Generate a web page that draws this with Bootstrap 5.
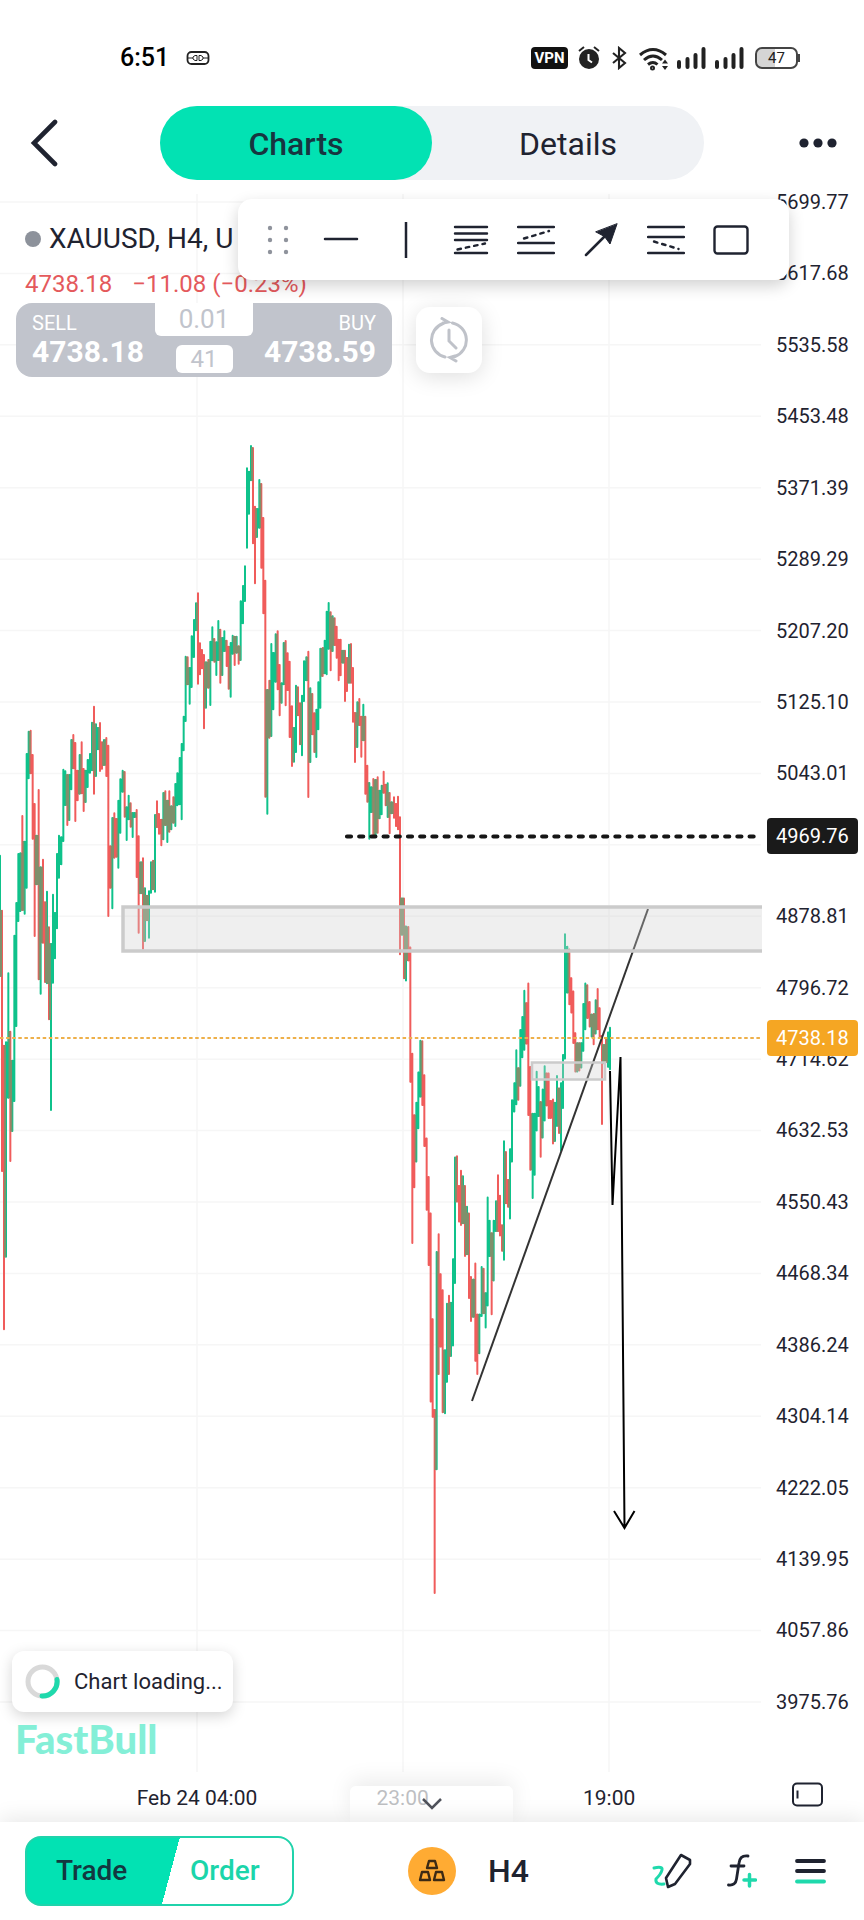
<!DOCTYPE html>
<html lang="en">
<head>
<meta charset="utf-8">
<meta name="viewport" content="width=device-width, initial-scale=1">
<title>XAUUSD H4 chart</title>
<link href="https://cdn.jsdelivr.net/npm/bootstrap@5.3.0/dist/css/bootstrap.min.css" rel="stylesheet">
<style>
  :root { --ink:#1f2330; --mint:#02e2b3; --mute:#c1c4cc; --red:#e4595c; }
  body { font-family: Roboto, "Liberation Sans", sans-serif; color: var(--ink); background:#fff; }
  button { background: none; border: 0; padding: 0; color: inherit; }
  svg { display: block; }
  .status-row { height: 100px; padding: 16px 64px 0 120px; }
  .clock-text { font-size: 25px; font-weight: 500; color:#000; }
  .vpn-tag { width: 37px; height: 22px; line-height: 22px; border-radius: 4px; background:#111; color:#fff; font-size: 15px; font-weight: 700; }
  .battery { width: 43px; height: 22px; border: 2px solid #444; border-radius: 7px; font-size: 15px; line-height: 18px; background: linear-gradient(90deg, #d5d5d5 46%, #fff 46%); color:#222; }
  .nub { width: 2px; height: 8px; background:#444; }
  .head-row { display: grid; grid-template-columns: 160px 1fr 160px; height: 84px; padding: 6px 0 4px; }
  .switch { background:#f0f2f5; border-radius: 37px; height: 74px; }
  .switch button { border-radius: 37px; font-size: 32px; padding-top: 2px; }
  .switch .on { background: var(--mint); font-weight: 500; color:#173540; }
  .chart-zone { min-height: 1590px; }
  .axis { width: 102px; padding: 8px 0 62px 14px; font-size: 20px; line-height: 20px; }
  .price-tag { left: 5px; width: 91px; height: 36px; line-height: 36px; padding-left: 9px; border-radius: 4px; color:#fff; }
  .quote { top: 35px; left: 16px; width: 376px; }
  .pair { font-size: 28px; line-height: 40px; padding-left: 9px; }
  .dot { width: 16px; height: 16px; border-radius: 50%; background:#8d929b; }
  .change { font-size: 24px; line-height: 30px; color: var(--red); padding-left: 9px; gap: 20px; margin-top: 10px; }
  .deal { height: 74px; border-radius: 16px; background: var(--mute); color:#fff; margin-top: 4px; }
  .deal button { padding: 8px 16px 0; font-size: 20px; line-height: 24px; }
  .deal strong { display: block; font-size: 30px; line-height: 34px; }
  .deal-mid { width: 98px; height: 74px; color: var(--mute); }
  .lot { width: 98px; height: 33px; border: 0; border-radius: 0 0 6px 6px; font-size: 26px; color: var(--mute); padding: 0; }
  .spread { width: 57px; height: 28px; line-height: 28px; border-radius: 6px; font-size: 24px; }
  .history { top: 123px; left: 416px; width: 66px; height: 66px; border-radius: 14px; background:#fff; box-shadow: 0 4px 22px rgba(0,0,0,.13); }
  .tools { top: 15px; left: 238px; right: 75px; height: 81px; border-radius: 14px; background:#fff; box-shadow: 0 6px 16px rgba(0,0,0,.18); padding: 0 26px 0 10px; }
  .tools button { flex: 1 1 0; }
  .grip { flex: 0 0 60px; }
  .loading { left: 12px; bottom: 62px; width: 221px; height: 61px; border-radius: 12px; background:#fff; box-shadow: 0 4px 14px rgba(0,0,0,.17); font-size: 22px; padding-left: 13px; gap: 14px; }
  .watermark { left: 15px; bottom: 15px; font-family: Lato, sans-serif; font-weight: 900; font-size: 40px; line-height: 40px; color:#84efd7; }
  .time-row { height: 48px; font-size: 21px; line-height: 48px; }
  .time-row .stamp { transform: translateX(-50%); }
  .stamp.under { color:#5c5f68; }
  .drawer { left: 350px; right: 351px; top: 12px; height: 36px; border-radius: 6px 6px 0 0; background: rgba(255,255,255,.6); box-shadow: 0 -6px 22px rgba(0,0,0,.08); }
  .bottom-row { height: 98px; background:#fff; padding: 0 38px 1px 25px; box-shadow: 0 -4px 20px rgba(0,0,0,.09); }
  .trade-pair { width: 269px; height: 70px; border: 2px solid #20d3ab; border-radius: 16px; background: linear-gradient(105deg, var(--mint) 0 54%, #fff 54%); font-size: 28px; }
  .trade-pair button { font-weight: 500; }
  .period { font-size: 32px; font-weight: 500; margin-left: 32px; margin-right: 9px; }
</style>
</head>
<body>
<div class="d-flex flex-column min-vh-100">
  <header>
    <div class="status-row d-flex align-items-center">
      <span class="clock-text">6:51</span>
      <svg class="ms-3" width="26" height="14" viewBox="0 0 24 14" fill="none" stroke="#222"><rect x="1.5" y="1" width="21" height="12" rx="4" stroke-width="1.8"/><path d="M2 7h5M17 7h5M11 4.5H9L7 6v2l2 1.500h2zM13 4.500h2L17 6v2l-2 1.500h-2z"/></svg>
      <span class="vpn-tag ms-auto text-center">VPN</span>
      <svg style="margin-left:10px" width="22" height="24" viewBox="0 0 22 24"><circle cx="11" cy="13" r="10" fill="#222"/><path d="M1 5l5-4M21 5l-5-4" stroke="#222" stroke-width="2"/><path d="M10.500 8v6l3.500 2.500" stroke="#fff" stroke-width="2" fill="none"/></svg>
      <svg style="margin-left:11px" width="16" height="24" viewBox="0 0 16 24" fill="none" stroke="#222" stroke-width="2.100"><path d="M2 7l12 10-6 5V2l6 5L2 17"/></svg>
      <svg style="margin-left:12px" width="31" height="25" viewBox="0 0 31 25" fill="none" stroke="#222" stroke-width="3"><path d="M1 9q13-11 26 0M5 14q9-8 18 0M9 18.500q5-4 9.500 0"/><circle cx="13.500" cy="22" r="1" /><path d="M23 17.500l3-4 3 4zM23 20l3 4 3-4z" fill="#222" stroke="none"/></svg>
      <svg style="margin-left:7px" width="29" height="22" viewBox="0 0 29 22" stroke="#222" stroke-width="4" stroke-linecap="round"><path d="M2 15v5M10.500 12v8M18.500 8v12M26.500 2v18"/></svg>
      <svg style="margin-left:9px" width="29" height="22" viewBox="0 0 29 22" stroke="#222" stroke-width="4" stroke-linecap="round"><path d="M2 15v5M10.500 12v8M18.500 8v12M26.500 2v18"/></svg>
      <span class="battery text-center" style="margin-left:11px">47</span><span class="nub"></span>
    </div>
    <nav class="head-row" aria-label="View">
      <button type="button" aria-label="Back" class="ps-4 ms-1"><svg width="34" height="48" viewBox="0 0 34 48" fill="none" stroke="#1f2330" stroke-width="4.600" stroke-linecap="round"><path d="M27 3L6 24l21 21"/></svg></button>
      <div class="switch d-flex">
        <button type="button" class="on w-50">Charts</button>
        <button type="button" class="w-50">Details</button>
      </div>
      <button type="button" aria-label="More" class="d-flex align-items-center justify-content-end" style="padding-right:27px"><svg width="38" height="10" viewBox="0 0 38 10" fill="#1f2330"><circle cx="5" cy="5" r="4.600"/><circle cx="19" cy="5" r="4.600"/><circle cx="33" cy="5" r="4.600"/></svg></button>
    </nav>
  </header>

  <main class="flex-grow-1 d-flex flex-column">
    <section class="chart-zone flex-grow-1 d-flex position-relative">
      <div class="flex-grow-1 position-relative">
        <svg class="position-absolute w-100 h-100" viewBox="0 184 762 1590" preserveAspectRatio="none" fill="none" role="img" aria-label="XAUUSD candles">
          <path id="grid" stroke="#f6f6f6" stroke-width="1.500"/>
          <g id="bars" stroke-linecap="round" transform="translate(0 420) scale(.33333)"></g>
          <path d="M472 1401L648 909" stroke="#333" stroke-width="2"/>
          <g fill="#cfcfcf" fill-opacity=".33" stroke="#cbcbcb" stroke-width="3.500"><path d="M770 907H123v44h647"/><path d="M532 1062.500h73v17h-73z" stroke-width="2.600"/></g>
          <path d="M347 836.500H758" stroke="#161616" stroke-width="4.200" stroke-linecap="round" stroke-dasharray="4 8.200"/>
          <path d="M0 1038H762" stroke="#eeb04a" stroke-width="1.800" stroke-dasharray="3.500 2.600"/>
          <path d="M610 1071l2.500 134 8-148L624.500 1527M614 1511l10.500 17 10-17" stroke="#000" stroke-width="2"/>
        </svg>
      </div>
      <div class="axis d-flex flex-column justify-content-between position-relative">
        <span>5699.77</span><span>5617.68</span><span>5535.58</span><span>5453.48</span><span>5371.39</span><span>5289.29</span><span>5207.20</span><span>5125.10</span><span>5043.01</span><span>&nbsp;</span><span>4878.81</span><span>4796.72</span><span>4714.62</span><span>4632.53</span><span>4550.43</span><span>4468.34</span><span>4386.24</span><span>4304.14</span><span>4222.05</span><span>4139.95</span><span>4057.86</span><span>3975.76</span>
        <span class="price-tag position-absolute" style="top:39.87%;background:#1a1a1a">4969.76</span>
        <span class="price-tag position-absolute" style="top:52.58%;background:#f5a623">4738.18</span>
      </div>

      <div class="quote position-absolute">
        <div class="pair d-flex align-items-center gap-2 text-nowrap"><span class="dot"></span>XAUUSD, H4, U</div>
        <div class="change d-flex text-nowrap"><span>4738.18</span><span>−11.08 (−0.23%)</span></div>
        <div class="deal d-flex justify-content-between align-items-start">
          <button type="button" class="text-start">SELL<strong>4738.18</strong></button>
          <div class="deal-mid d-flex flex-column align-items-center justify-content-between pb-1 position-absolute start-50 translate-middle-x">
            <input class="lot text-center bg-white" value="0.01" aria-label="Lots">
            <span class="spread bg-white text-center">41</span>
          </div>
          <button type="button" class="text-end">BUY<strong>4738.59</strong></button>
        </div>
      </div>
      <button type="button" aria-label="History" class="history position-absolute d-flex align-items-center justify-content-center"><svg width="42" height="46" viewBox="0 0 42 46" fill="none" stroke="#bfc2c9" stroke-width="3" stroke-linecap="round"><path d="M24.500 6A17.500 17.500 0 0 1 27 39.500M17 40A17.500 17.500 0 0 1 15 6.500L18 5M14 1.500L20 5l-5 1M27 39l-5 1.500 6 3.500M21 13v11l7 7"/></svg></button>

      <div class="tools position-absolute d-flex align-items-stretch">
        <span class="grip d-flex align-items-center justify-content-center"><svg width="22" height="30" fill="#8f939c"><circle cx="3" cy="3" r="2.200"/><circle cx="19" cy="3" r="2.200"/><circle cx="3" cy="15" r="2.200"/><circle cx="19" cy="15" r="2.200"/><circle cx="3" cy="27" r="2.200"/><circle cx="19" cy="27" r="2.200"/></svg></span>
        <button type="button" aria-label="Horizontal line" class="d-flex align-items-center justify-content-center"><svg width="36" height="36" stroke="#1f2330" stroke-width="2.500" stroke-linecap="round"><path d="M2 17H34"/></svg></button>
        <button type="button" aria-label="Vertical line" class="d-flex align-items-center justify-content-center"><svg width="36" height="38" stroke="#1f2330" stroke-width="2.500"><path d="M18 1V37"/></svg></button>
        <button type="button" aria-label="Fibonacci retracement" class="d-flex align-items-center justify-content-center"><svg width="36" height="30" stroke="#1f2330" stroke-width="2.400" stroke-linecap="round"><path d="M2 2H34M2 8.500H34M2 15H34M2 28H34"/><path d="M4.500 24.500L32 18.500" stroke-dasharray="3.500 5"/></svg></button>
        <button type="button" aria-label="Fibonacci extension" class="d-flex align-items-center justify-content-center"><svg width="38" height="30" stroke="#1f2330" stroke-width="2.400" stroke-linecap="round"><path d="M1 2H37M1 18H37M1 28H37"/><path d="M7 13.500L32 6" stroke-dasharray="3.500 5"/></svg></button>
        <button type="button" aria-label="Arrow" class="d-flex align-items-center justify-content-center"><svg width="34" height="34" stroke="#1f2330" stroke-width="2.500" stroke-linecap="round"><path d="M2 32L22 12"/><path d="M33 1L26 21 20.500 13.500 12 9z" fill="#1f2330" stroke-width="1"/></svg></button>
        <button type="button" aria-label="Fibonacci channel" class="d-flex align-items-center justify-content-center"><svg width="38" height="30" stroke="#1f2330" stroke-width="2.400" stroke-linecap="round"><path d="M1 2H37M1 12H37M1 28H37"/><path d="M7 16.500L31.500 24" stroke-dasharray="3.500 5"/></svg></button>
        <button type="button" aria-label="Rectangle" class="d-flex align-items-center justify-content-center"><svg width="36" height="30" fill="none" stroke="#1f2330" stroke-width="2.400"><rect x="1.500" y="1.500" width="33" height="27" rx="3"/></svg></button>
      </div>

      <div class="loading position-absolute d-flex align-items-center"><svg width="35" height="35" fill="none" stroke-width="5"><circle cx="17.500" cy="17.500" r="14.500" stroke="#d9d9d9"/><path d="M32 15.500A14.500 14.500 0 0 1 17 32" stroke="#1fd9ac" stroke-linecap="round"/></svg>Chart loading...</div>
      <div class="watermark position-absolute">FastBull</div>
    </section>

    <div class="time-row position-relative">
      <span class="stamp position-absolute text-nowrap" style="left:22.8%">Feb 24 04:00</span>
      <span class="stamp under position-absolute" style="left:46.6%">23:00</span>
      <span class="stamp position-absolute" style="left:70.5%">19:00</span>
      <button type="button" aria-label="Expand" class="drawer position-absolute d-flex justify-content-center align-items-center"><svg width="24" height="14" fill="none" stroke="#50535c" stroke-width="2.500"><path d="M3 2l9 9 9-9"/></svg></button>
      <button type="button" aria-label="Landscape" class="position-absolute end-0 top-0 pt-2" style="padding-right:40px"><svg width="32" height="25" fill="none" stroke="#1f2330" stroke-width="2"><rect x="1" y="1.500" width="29" height="22" rx="4"/><path d="M5.500 8.500v8"/></svg></button>
    </div>
  </main>

  <footer class="bottom-row d-flex align-items-center justify-content-between position-relative">
    <div class="trade-pair d-flex">
      <button type="button" class="text-start" style="width:150px;padding-left:29px;color:#123840">Trade</button>
      <button type="button" class="text-start" style="padding-left:13px;color:#1bd5aa">Order</button>
    </div>
    <div class="d-flex align-items-center">
      <button type="button" aria-label="Commodity"><svg width="48" height="48" fill="none" stroke="#3c2a14" stroke-width="2.400" stroke-linejoin="round"><circle cx="24" cy="24" r="24" fill="#ffab33" stroke="none"/><path d="M21 14h6l2 7H19zM14 25h6l2 8H12zM28 25h6l2 8H26z"/></svg></button>
      <button type="button" class="period">H4</button>
    </div>
    <div class="d-flex align-items-center">
      <button type="button" aria-label="Draw"><svg width="40" height="36" fill="none" stroke="#1f2330" stroke-width="2.600" stroke-linejoin="round" stroke-linecap="round"><path d="M29 2l9 5v4L23 31l-7 3-2-9z"/><path d="M2 15q9-2 8 2T4 26q-1 6 8 5" stroke="#1fd9ac" stroke-width="3"/></svg></button>
      <button type="button" aria-label="Indicators" style="margin-left:35px"><svg width="30" height="36" fill="none" stroke-linecap="round"><path d="M21 3q-8-1-9 7L9.500 26q-1 7-8 6M4 13H17" stroke="#1f2330" stroke-width="2.800"/><path d="M17 27H28.500M22.500 21.500V33" stroke="#1fd9ac" stroke-width="3.500"/></svg></button>
      <button type="button" aria-label="Menu" style="margin-left:38px"><svg width="31" height="28" stroke-width="3.800" stroke-linecap="round"><path d="M2 4H29M2 14H29" stroke="#1f2330"/><path d="M2 24.500H29" stroke="#1fd9ac"/></svg></button>
    </div>
  </footer>
</div>

<script src="https://cdn.jsdelivr.net/npm/bootstrap@5.3.0/dist/js/bootstrap.bundle.min.js"></script>
<script>
// Each bar: x, high, low, direction (g up, r down)
const early = `0 1305 1670 g,6 1470 2255 r,12 1875 2730 r,18 1865 2512 g,25 1658 2035 g,31 1833 2225 r,37 1920 2135 g,43 1545 2045 g,49 1447 1820 g,55 1300 1505 g,61 1298 1475 g,67 1186 1472 r,74 1263 1483 g,80 1000 1405 g,86 933 1077 g,92 930 1062 r,98 1003 1258 r,104 1150 1550 r,110 1245 1395 g,116 1108 1680 r,122 1340 1723 g,129 1317 1570 r,135 1445 1688 r,141 1413 1692 g,147 1520 1800 r,153 1570 2072 g,159 1422 1690 g,165 1477 1617 g,171 1300 1527 g,177 1245 1375 g,184 1250 1335 g,190 1047 1265 g,196 1052 1157 g,202 1063 1217 r,208 1063 1202 g,214 958 1110 g,220 943 1047 r,226 967 1205 r,233 1050 1143 r,239 1003 1123 g,245 965 1122 r,251 1045 1175 r,257 1050 1148 g,263 1018 1103 g,270 1000 1060 g,276 906 1053 g,282 858 1123 r,288 911 1070 g,294 922 990 g,300 907 1055 r,306 965 1048 r,312 958 1037 g,319 952 1070 r,325 975 1490 r,331 1277 1405 r,337 1192 1467 g,343 1178 1315 r,349 1195 1312 r,355 1140 1345 g,361 1076 1240 g,368 1050 1117 g,374 1054 1192 r,380 1160 1262 g,386 1125 1200 g,392 1148 1222 r,398 1177 1253 g,404 1177 1193 g,410 1168 1373 r,416 1247 1540 r,423 1325 1422 g,429 1313 1588 r,435 1403 1565 g,441 1425 1503 r,447 1412 1555 g,453 1325 1420 g,459 1320 1410 r,465 1183 1417 g,471 1142 1223 r,477 1180 1243 r,484 1197 1278 r,490 1117 1260 g,496 1112 1217 r,502 1140 1268 g,508 1112 1237 r,514 1157 1230 g,520 1130 1210 r,526 1090 1220 g,532 1058 1158 g,539 1012 1155 g,545 970 1200 g,551 888 993 g,557 708 905 g,563 710 795 r,569 742 853 g,575 647 803 g,582 598 713 g,588 548 633 g,594 518 793 r,600 668 765 r,606 688 747 r,612 703 927 r,618 725 865 g,625 718 805 r,631 663 857 g,637 620 723 g,643 655 727 r,649 665 767 g,655 601 722 g,661 627 790 r,667 652 767 g,673 632 695 g,680 660 740 r,686 678 808 r,692 667 832 g,698 645 703 g,704 648 737 r,710 648 700 g,716 677 733 r,722 542 722 g,729 496 612 g,735 437 545 g,741 143 385 g,747 153 283 g,753 76 183 g,759 82 372 r,765 258 492 r,771 265 353 g,778 178 325 g,784 190 445 r,790 292 582 r,796 480 1132 r,802 808 1183 g,808 780 955 r,814 670 950 g,820 697 870 g,827 641 787 g,833 632 810 r,839 733 888 r,845 788 850 g,851 667 795 g,857 661 858 r,863 698 812 r,869 723 953 r,876 857 1040 r,882 922 1027 g,888 795 998 g,894 800 888 r,900 848 975 r,906 825 1008 g,912 722 845 g,919 710 783 g,925 693 1133 r,931 803 1028 g,937 820 945 r,943 878 998 r,949 867 1013 g,955 785 930 g,961 684 865 g,968 682 770 r,974 660 762 g,980 573 765 g,986 547 688 g,992 575 753 r,998 587 695 g,1004 593 677 r,1010 618 715 r,1016 657 783 r,1022 657 768 r,1029 690 730 g,1035 690 845 r,1041 712 815 r,1047 672 790 g,1053 670 790 r,1059 742 907 r,1065 877 1028 r,1072 845 983 g,1078 835 917 r,1084 888 1012 r,1090 852 963 g,1096 888 1123 r,1102 1035 1147 r,1108 1087 1258 g,1114 1100 1178 g,1120 1075 1250 r,1127 1078 1248 g,1133 1070 1240 r,1139 1110 1197 g,1145 1095 1185 g,1151 1053 1120 r,1157 1092 1158 r,1163 1088 1193 g,1169 1117 1242 r,1175 1145 1182 g,1182 1130 1195 r,1188 1150 1220 r,1194 1128 1230 r,1200 1190 1605 r`;
const late = `66 50 155 g,72 50 277 r,78 128 283 g,85 130 227 r,91 187 567 r,97 485 1018 r,103 657 862 r,109 622 790 g,115 537 697 g,121 448 608 g,127 450 632 r,133 545 747 r,140 722 925 r,146 830 1080 r,152 932 1462 r,158 1228 1505 r,164 1482 1998 r,170 1040 1652 g,176 990 1385 r,182 1102 1308 r,188 1147 1492 r,195 1315 1495 g,201 1185 1407 g,207 1162 1385 r,213 1182 1335 g,219 1060 1305 g,225 775 1130 g,231 772 902 r,237 855 958 r,243 812 968 r,249 828 963 g,255 855 1055 r,261 913 1050 g,267 932 1172 r,273 1110 1237 r,280 1117 1225 g,286 1072 1348 r,292 1215 1385 r,298 1215 1327 g,305 1082 1223 g,311 1087 1215 r,317 1155 1255 g,323 887 1193 g,329 952 1055 g,335 987 1218 r,341 952 1123 g,348 898 985 g,354 825 985 r,360 882 997 r,366 965 1040 r,372 730 1065 g,378 760 907 r,384 838 917 r,390 752 950 g,396 615 790 g,403 567 650 g,409 475 630 g,415 525 617 r,421 418 578 g,427 382 498 g,433 308 477 g,439 343 460 r,445 288 660 r,451 522 813 r,458 653 892 g,464 653 827 g,470 535 703 g,476 578 663 g,482 620 777 r,488 585 723 g,494 520 675 g,500 540 633 r,506 540 668 r,512 617 668 r,519 613 740 r,525 622 733 g,531 547 690 g,537 582 710 r,543 567 760 g,549 488 640 g,555 150 502 g,562 185 317 g,568 193 350 r,574 273 373 r,580 310 458 r,586 427 538 r,592 455 538 g,598 455 535 r,604 455 527 g,610 345 480 g,616 288 420 g,622 293 388 r,629 340 412 r,635 375 440 g,641 373 462 r,647 335 432 g,653 303 420 r,659 357 440 r,666 435 685 r,672 460 515 g,678 445 512 r,684 425 525 g,690 412 532 g`;
const parse = s => s.split(',').map(t => { const p = t.split(' '); return [+p[0], +p[1], +p[2], p[3]]; });
const k = 3 / 2.8;
const bars = parse(early).concat(parse(late).map(b => [b[0] + 1140, 1380 + b[1] * k, 1380 + b[2] * k, b[3]]));
const colour = { g: '#0fc28b', r: '#f05c5b', m: '#7f906c' };
const line = { g: '', r: '' }, body = { g: '', r: '', m: '' };
bars.forEach((b, i) => {
  line[b[3]] += `M${b[0]} ${b[1] + 2}V${b[2] - 2}`;
  const n = bars[i + 1];
  if (!n) return;
  const top = Math.max(b[1], n[1]), low = Math.min(b[2], n[2]);
  // neighbouring bars merge where their ranges overlap
  if (low > top) body[b[3] === n[3] ? b[3] : 'm'] += `M${(b[0] + n[0]) / 2} ${top}V${low}`;
});
const path = (d, c, w, cap) => `<path d="${d}" stroke="${c}" stroke-width="${w}" stroke-linecap="${cap}"/>`;
document.getElementById('bars').innerHTML =
  path(line.g, colour.g, 6, 'round') + path(line.r, colour.r, 6, 'round') +
  path(body.m, colour.m, 6, 'butt') + path(body.g, colour.g, 7, 'butt') + path(body.r, colour.r, 7, 'butt');
let d = 'M197 194V1772M403 194V1772M609 194V1772';
for (let i = 0; i < 22; i++) d += `M0 ${202 + i * 1500 / 21}H761`;
document.getElementById('grid').setAttribute('d', d);
</script>
</body>
</html>
